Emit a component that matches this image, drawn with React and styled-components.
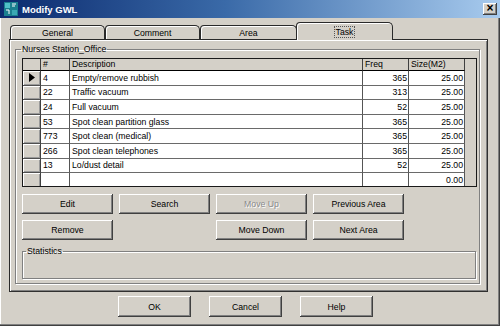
import React from 'react'
import styled, { createGlobalStyle } from 'styled-components'

const GlobalStyle = createGlobalStyle`
  html, body {
    margin: 0;
    padding: 0;
    background: #d4d0c8;
  }
  body {
    font-family: "Liberation Sans", Arial, sans-serif;
    font-size: 8.7px;
    color: #000;
  }
`

const rows = [
  { id: '4', desc: 'Empty/remove rubbish', freq: '365', size: '25.00', current: true },
  { id: '22', desc: 'Traffic vacuum', freq: '313', size: '25.00' },
  { id: '24', desc: 'Full vacuum', freq: '52', size: '25.00' },
  { id: '53', desc: 'Spot clean partition glass', freq: '365', size: '25.00' },
  { id: '773', desc: 'Spot clean (medical)', freq: '365', size: '25.00' },
  { id: '266', desc: 'Spot clean telephones', freq: '365', size: '25.00' },
  { id: '13', desc: 'Lo/dust detail', freq: '52', size: '25.00' },
  { id: '', desc: '', freq: '', size: '0.00' },
]

const cols = [18, 29, 293, 46, 56]

export default function App() {
  return (
    <>
      <GlobalStyle />
      <Window>
        <TitleBar>
          <AppIcon />
          <Title>Modify GWL</Title>
          <CloseBox>×</CloseBox>
        </TitleBar>
        <Body>
          <TabRow>
            <Tab $w={95}>General</Tab>
            <Tab $w={95}>Comment</Tab>
            <Tab $w={97}>Area</Tab>
            <Tab $w={97} $active>
              <Focus>Task</Focus>
            </Tab>
          </TabRow>
          <Panel>
            <Group $w={465} $h={241} $pl={6}>
              <Legend>Nurses Station_Office</Legend>
              <Grid>
                <Row $head>
                  <HeadCell $w={cols[0]} />
                  <HeadCell $w={cols[1]}>#</HeadCell>
                  <HeadCell $w={cols[2]}>Description</HeadCell>
                  <HeadCell $w={cols[3]}>Freq</HeadCell>
                  <HeadCell $w={cols[4]}>Size(M2)</HeadCell>
                </Row>
                {rows.map((r, i) => (
                  <Row key={i}>
                    <Indicator $w={cols[0]}>
                      {r.current && (
                        <svg width="6" height="9" viewBox="0 0 6 9">
                          <polygon points="0,0 6,4.5 0,9" fill="#000" />
                        </svg>
                      )}
                    </Indicator>
                    <Cell $w={cols[1]}>{r.id}</Cell>
                    <Cell $w={cols[2]}>{r.desc}</Cell>
                    <Cell $w={cols[3]} $right>{r.freq}</Cell>
                    <Cell $w={cols[4]} $right>{r.size}</Cell>
                  </Row>
                ))}
              </Grid>
              <ButtonGrid>
                <Button>Edit</Button>
                <Button>Search</Button>
                <Button disabled>Move Up</Button>
                <Button>Previous Area</Button>
                <Button>Remove</Button>
                <span />
                <Button>Move Down</Button>
                <Button>Next Area</Button>
              </ButtonGrid>
              <Group $w={454} $h={34} $pl={4} $mt={5}>
                <Legend>Statistics</Legend>
              </Group>
            </Group>
          </Panel>
          <Footer>
            <Button $w={73} $h={21}>OK</Button>
            <Button $w={73} $h={21}>Cancel</Button>
            <Button $w={73} $h={21}>Help</Button>
          </Footer>
        </Body>
      </Window>
    </>
  )
}

function AppIcon() {
  return (
    <svg width="14" height="14" viewBox="0 0 14 14">
      <rect x="0" y="0" width="14" height="14" fill="#1a7f8f" />
      <rect x="1" y="1" width="5" height="5" fill="#4fc0c8" />
      <rect x="8" y="8" width="5" height="5" fill="#3aa8b4" />
      <path d="M2 8 h3 v4 M8 2 h4 M8 4 h3" stroke="#fff" strokeWidth="1" fill="none" />
    </svg>
  )
}

const Window = styled.div`
  width: 500px;
  height: 326px;
  box-sizing: border-box;
  padding: 0 2px 3px 2px;
  background: #d4d0c8;
  box-shadow: inset -1px -1px #404040, inset -2px -2px #808080, inset 1px 0 #fff;
  display: flex;
  flex-direction: column;
`

const TitleBar = styled.div`
  height: 18px;
  margin: 0 -2px;
  padding: 0 3px 0 4px;
  display: flex;
  align-items: center;
  gap: 4px;
  background: linear-gradient(90deg, #0b2a6e 0%, #3a6aa8 45%, #a8cbee 100%);
`

const Title = styled.span`
  color: #fff;
  font-weight: bold;
  font-size: 9.5px;
`

const CloseBox = styled.span`
  margin-left: auto;
  width: 14px;
  height: 12px;
  box-sizing: border-box;
  background: #d4d0c8;
  box-shadow: inset -1px -1px #404040, inset 1px 1px #fff, inset -2px -2px #808080;
  font-size: 12px;
  font-weight: bold;
  line-height: 11px;
  text-align: center;
`

const Body = styled.div`
  padding: 4px 10px 0 7px;
  display: flex;
  flex-direction: column;
`

const TabRow = styled.div`
  height: 17px;
  display: flex;
  align-items: flex-end;
  padding-left: 1px;
`

const Tab = styled.div`
  position: relative;
  width: ${p => p.$w}px;
  height: ${p => (p.$active ? 18 : 14)}px;
  margin: 0 ${p => (p.$active ? -1 : 0)}px ${p => (p.$active ? -1 : 0)}px;
  z-index: ${p => (p.$active ? 2 : 1)};
  box-sizing: border-box;
  background: #d4d0c8;
  border: 1px solid #2a2a2a;
  border-bottom: none;
  border-radius: 4px 5px 0 0;
  box-shadow: inset 1px 1px #fff;
  display: flex;
  align-items: center;
  justify-content: center;
  padding-top: ${p => (p.$active ? 0 : 1)}px;
`

const Focus = styled.span`
  outline: 1px dotted #555;
  outline-offset: 0;
  padding: 0 1px;
`

const Panel = styled.div`
  position: relative;
  z-index: 1;
  width: 479px;
  height: 253px;
  box-sizing: border-box;
  border-top: 1px solid #2a2a2a;
  border-left: 1px solid #2a2a2a;
  border-right: 1px solid #303030;
  border-bottom: 1px solid #303030;
  box-shadow: inset 1px 1px #fff, inset -1px -1px #808080;
  padding: 3px 0 0 5px;
`

const Group = styled.fieldset`
  width: ${p => p.$w}px;
  height: ${p => p.$h}px;
  box-sizing: border-box;
  margin: ${p => p.$mt || 0}px 0 0 0;
  padding: 3px 2px 0 ${p => p.$pl}px;
  border: 1px solid #808080;
  box-shadow: 1px 1px 0 #fff, inset 1px 1px 0 #fff;
  min-width: 0;
`

const Legend = styled.legend`
  padding: 0 1px;
  margin-left: -1px;
  line-height: 12px;
  font-size: 8.7px;
`

const Grid = styled.div`
  width: 455px;
  height: 129px;
  box-sizing: border-box;
  border: 1px solid #1a1a1a;
  background: #d4d0c8;
  overflow: hidden;
`

const Row = styled.div`
  display: flex;
  height: ${p => (p.$head ? 12 : 14.6)}px;
`

const HeadCell = styled.div`
  width: ${p => p.$w}px;
  flex: none;
  box-sizing: border-box;
  border-right: 1px solid #404040;
  border-bottom: 1px solid #000;
  padding-left: 2px;
  line-height: 11px;
  white-space: nowrap;
  overflow: hidden;
`

const Indicator = styled.div`
  width: ${p => p.$w}px;
  flex: none;
  box-sizing: border-box;
  background: #d4d0c8;
  border-right: 1px solid #404040;
  border-bottom: 1px solid #505050;
  box-shadow: inset 1px 1px #fff, inset -1px -1px #9a9a9a;
  display: flex;
  align-items: center;
  justify-content: center;
`

const Cell = styled.div`
  width: ${p => p.$w}px;
  flex: none;
  box-sizing: border-box;
  background: #fff;
  border-right: 1px solid #555;
  border-bottom: 1px solid #6a6a6a;
  padding: 0 ${p => (p.$right ? 1 : 2)}px;
  display: flex;
  align-items: center;
  justify-content: ${p => (p.$right ? 'flex-end' : 'flex-start')};
  white-space: nowrap;
  overflow: hidden;
`

const ButtonGrid = styled.div`
  margin-top: 7px;
  display: grid;
  grid-template-columns: repeat(4, 91px);
  grid-auto-rows: 20px;
  column-gap: 6px;
  row-gap: 6px;
`

const Button = styled.button`
  width: ${p => (p.$w ? `${p.$w}px` : 'auto')};
  height: ${p => (p.$h ? `${p.$h}px` : 'auto')};
  margin: 0;
  padding: 0;
  background: #d4d0c8;
  border: none;
  box-shadow: inset -1px -1px #404040, inset 1px 1px #fff, inset -2px -2px #808080;
  font-family: "Liberation Sans", Arial, sans-serif;
  font-size: 8.7px;
  color: #000;

  &:disabled {
    color: #8a8a8a;
    text-shadow: 1px 1px #fff;
  }
`

const Footer = styled.div`
  display: flex;
  gap: 18px;
  padding: 4px 0 0 109px;
`
